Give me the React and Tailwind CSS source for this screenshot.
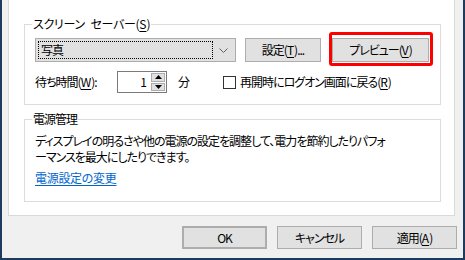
import React from 'react';

const Key = ({ children }) => <span className="underline underline-offset-2 tracking-normal">{children}</span>;

const Button = ({ children, className = '' }) => (
  <button
    type="button"
    className={`h-[23px] bg-[#e1e1e1] border border-[#adadad] flex items-center justify-center leading-4 ${className}`}
  >
    {children}
  </button>
);

const Triangle = ({ down }) => (
  <svg width="7" height="4" viewBox="0 0 7 4">
    <path d={down ? 'M0 0H7L3.5 4Z' : 'M0 4H7L3.5 0Z'} fill="#000" />
  </svg>
);

export default function App() {
  return (
    <div className="w-[465px] h-[260px] bg-[#f0f0f0] border-x-2 border-b-2 border-[#1b3b5f] flex flex-col text-[12px] leading-4 tracking-[-1px] text-black font-['Noto_Sans_CJK_JP','Noto_Sans',sans-serif] [font-feature-settings:'palt'] overflow-hidden">
      <div className="ml-[6px] mr-[8px] h-[216px] shrink-0 bg-white border-x border-b border-[#d9d9d9] pt-[16px] pl-[15px] pr-[13px]">
        {/* screen saver */}
        <fieldset className="border border-[#dcdcdc] p-0 m-0 min-w-0">
          <legend className="ml-[7px] px-[1px] leading-4 tracking-[-0.3px]">
            スクリーン{'\u2002'}セーバー(<Key>S</Key>)
          </legend>
          <div className="pl-[10px] pt-[6px] pb-[11px]">
            <div className="flex items-center h-[24px]">
              <div className="w-[201px] h-[24px] bg-[#e1e1e1] border border-[#adadad] flex items-center p-[2px]">
                <div className="flex-1 h-full border border-dotted border-black flex items-center pl-[2px]">写真</div>
                <div className="w-[20px] flex items-center justify-center">
                  <svg width="9" height="5" viewBox="0 0 9 5">
                    <path d="M0.5 0.5L4.5 4.5L8.5 0.5" fill="none" stroke="#606060" strokeWidth="1" />
                  </svg>
                </div>
              </div>
              <Button className="ml-[9px] w-[76px] h-[24px]">
                設定(<Key>T</Key>)...
              </Button>
              <div className="relative ml-[11px]">
                <Button className="w-[97px] h-[24px]">
                  プレビュー(<Key>V</Key>)
                </Button>
                <span className="absolute -left-[3px] -right-[4px] -top-[6px] -bottom-[4px] border-[3px] border-[#ff0000] rounded-[3px] pointer-events-none" />
              </div>
            </div>
            <div className="flex items-center h-[22px] mt-[9px]">
              <span className="w-[82px]">
                待ち時間(<Key>W</Key>):
              </span>
              <div className="w-[50px] h-[22px] border border-[#7a7a7a] bg-white flex">
                <div className="flex-1 flex items-center justify-end pr-[4px]">1</div>
                <div className="w-[16px] flex flex-col gap-px p-px">
                  <div className="flex-1 bg-[#e1e1e1] border border-[#adadad] flex items-center justify-center">
                    <Triangle />
                  </div>
                  <div className="flex-1 bg-[#e1e1e1] border border-[#adadad] flex items-center justify-center">
                    <Triangle down />
                  </div>
                </div>
              </div>
              <span className="ml-[11px]">分</span>
              <span className="ml-[34px] w-[13px] h-[13px] border border-[#333333] bg-white" />
              <span className="ml-[4px]">
                再開時にログオン画面に戻る(<Key>R</Key>)
              </span>
            </div>
          </div>
        </fieldset>

        {/* power management */}
        <fieldset className="mt-[6px] border border-[#dcdcdc] p-0 m-0 min-w-0">
          <legend className="ml-[7px] px-[1px] leading-4">電源管理</legend>
          <div className="pl-[10px] pt-[6px] pb-[15px]">
            <p>ディスプレイの明るさや他の電源の設定を調整して、電力を節約したりパフォ</p>
            <p>ーマンスを最大にしたりできます。</p>
            <a href="#" className="block mt-[5px] w-fit text-[#0066cc] underline underline-offset-2 tracking-[-0.3px]">
              電源設定の変更
            </a>
          </div>
        </fieldset>
      </div>

      <div className="flex justify-end gap-[10px] pr-[6px] mt-[10px]">
        <Button className="w-[85px] border-2 border-[#0078d7]">OK</Button>
        <Button className="w-[85px]">キャンセル</Button>
        <Button className="w-[85px]">
          適用(<Key>A</Key>)
        </Button>
      </div>
    </div>
  );
}
